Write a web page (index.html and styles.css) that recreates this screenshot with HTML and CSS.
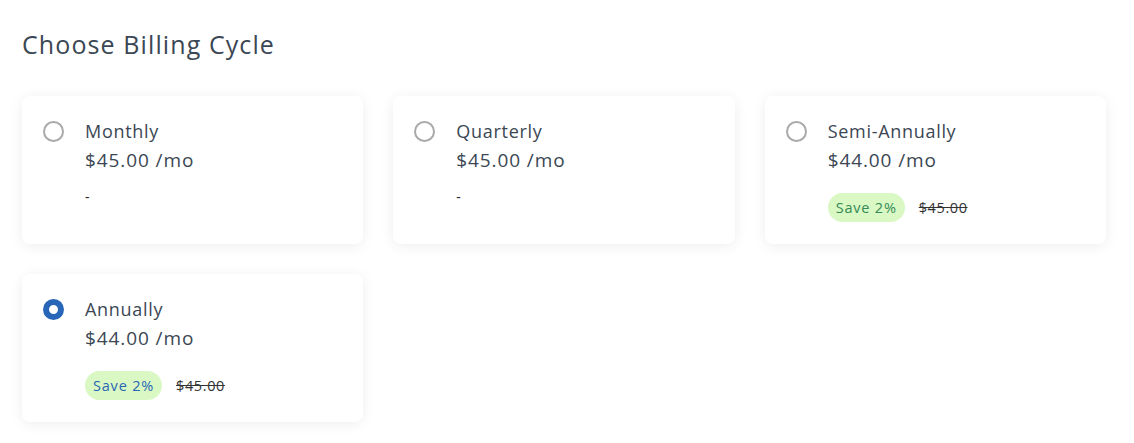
FILE: index.html
```html
<!DOCTYPE html>
<html lang="en">

<head>
    <meta charset="UTF-8">
    <meta name="viewport" content="width=device-width, initial-scale=1.0">
    <title>Choose Billing Cycle</title>
    <link rel="stylesheet" href="styles.css">
</head>

<body>
    <div class="billing">
        <h2 class="billing-title">Choose Billing Cycle</h2>

        <div class="cycle-grid">
            <label class="cycle-card">
                <input type="radio" name="cycle" value="monthly">
                <span class="radio-dot"></span>
                <span class="cycle-info">
                    <span class="cycle-name">Monthly</span>
                    <span class="cycle-price">$45.00 /mo</span>
                    <span class="cycle-extra">-</span>
                </span>
            </label>

            <label class="cycle-card">
                <input type="radio" name="cycle" value="quarterly">
                <span class="radio-dot"></span>
                <span class="cycle-info">
                    <span class="cycle-name">Quarterly</span>
                    <span class="cycle-price">$45.00 /mo</span>
                    <span class="cycle-extra">-</span>
                </span>
            </label>

            <label class="cycle-card">
                <input type="radio" name="cycle" value="semi">
                <span class="radio-dot"></span>
                <span class="cycle-info">
                    <span class="cycle-name">Semi-Annually</span>
                    <span class="cycle-price">$44.00 /mo</span>
                    <span class="cycle-save">
                        <span class="save-badge">Save 2%</span>
                        <s class="old-price">$45.00</s>
                    </span>
                </span>
            </label>

            <label class="cycle-card">
                <input type="radio" name="cycle" value="annually" checked>
                <span class="radio-dot"></span>
                <span class="cycle-info">
                    <span class="cycle-name">Annually</span>
                    <span class="cycle-price">$44.00 /mo</span>
                    <span class="cycle-save">
                        <span class="save-badge">Save 2%</span>
                        <s class="old-price">$45.00</s>
                    </span>
                </span>
            </label>
        </div>
    </div>
</body>

</html>
```

FILE: styles.css
```css
body {
    margin: 0;
    background: #fff;
    font-family: "Open Sans", Arial, sans-serif;
    color: #3b4754;
}

.billing {
    padding: 28px 22px;
}

.billing-title {
    margin: 0 0 36px;
    font-size: 25px;
    font-weight: 400;
    line-height: 32px;
    letter-spacing: 1.1px;
}

.cycle-grid {
    display: grid;
    grid-template-columns: repeat(3, 1fr);
    gap: 30px;
    width: 1084px;
}

.cycle-card {
    display: flex;
    align-items: flex-start;
    height: 148px;
    box-sizing: border-box;
    padding: 24px 20px;
    background: #fff;
    border-radius: 8px;
    box-shadow: 0 2px 14px rgba(0, 0, 0, 0.07);
    cursor: pointer;
}

.cycle-card input {
    display: none;
}

.radio-dot {
    flex: none;
    width: 21px;
    height: 21px;
    box-sizing: border-box;
    margin: 1px 21px 0 1px;
    border: 2px solid #a9a9a9;
    border-radius: 50%;
}

.cycle-card input:checked + .radio-dot {
    border: 6px solid #2866b8;
}

.cycle-info {
    display: flex;
    flex-direction: column;
}

.cycle-name {
    font-size: 18px;
    line-height: 22px;
    letter-spacing: 0.7px;
}

.cycle-price {
    margin-top: 7px;
    font-size: 19px;
    line-height: 22px;
    letter-spacing: 0.9px;
}

.cycle-extra {
    margin-top: 16px;
    font-size: 14px;
    color: #222;
}

.cycle-save {
    display: flex;
    align-items: center;
    gap: 14px;
    margin-top: 22px;
}

.save-badge {
    padding: 5px 8px 5px;
    font-size: 14.5px;
    font-weight: 500;
    line-height: 19px;
    letter-spacing: 0.8px;
    color: #358a55;
    background: #d9f8c4;
    border-radius: 15px;
}

.cycle-card input:checked ~ .cycle-info .save-badge {
    color: #2a66b4;
}

.old-price {
    font-size: 14.5px;
    letter-spacing: 0.6px;
    color: #333;
}
```
